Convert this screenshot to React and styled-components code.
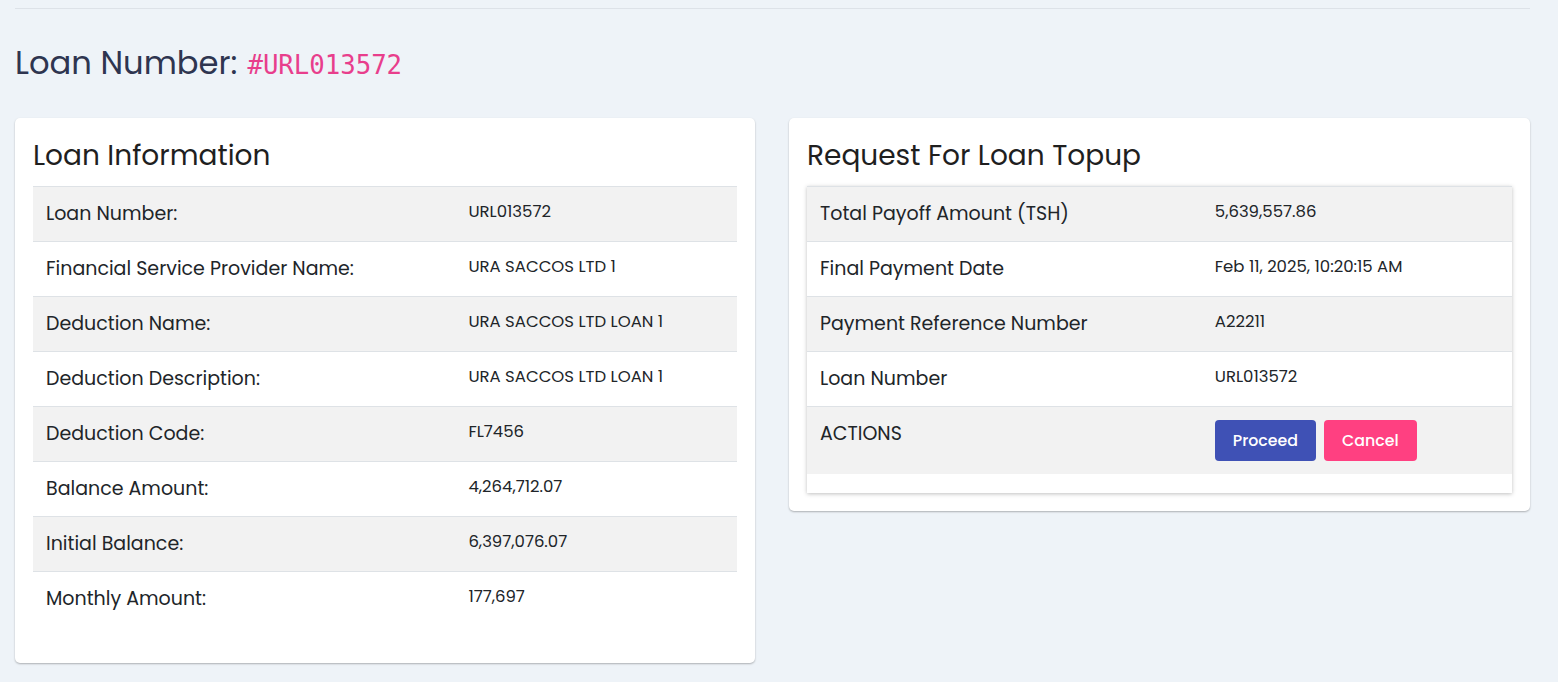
import React from "react";
import styled, { createGlobalStyle } from "styled-components";

const Global = createGlobalStyle`
  html, body { margin: 0; padding: 0; background: #eef3f8; }
  body { font-family: "Poppins", "Inter", "Noto Sans", sans-serif; color: #212529; }
  * { box-sizing: border-box; }
`;

const Page = styled.div`
  padding: 8px 28px 20px 15px;
  min-height: 682px;
`;

const Rule = styled.hr`
  margin: 0;
  border: 0;
  border-top: 1px solid #dde2e8;
`;

const PageTitle = styled.h1`
  margin: 34px 0 33px;
  font-size: 32.2px;
  font-weight: 400;
  color: #2e3550;
  line-height: 40px;
  display: flex;
  align-items: baseline;
  gap: 10px;
`;

const Code = styled.span`
  font-family: "DejaVu Sans Mono", "Liberation Mono", monospace;
  font-size: 25.7px;
  color: #e83e8c;
`;

const Grid = styled.div`
  display: grid;
  grid-template-columns: 740px 741px;
  gap: 34px;
  align-items: start;
`;

const Card = styled.section`
  background: #fff;
  border-radius: 5px;
  box-shadow: 0 1px 2px rgba(0, 0, 0, 0.28);
  padding: 18px 18px ${(p) => p.$pb || 18}px;
`;

const CardTitle = styled.h2`
  margin: 2px 0 12px;
  font-size: 28px;
  font-weight: 400;
  line-height: 36px;
  color: #1f1f1f;
`;

const TableWrap = styled.div`
  box-shadow: ${(p) => (p.$raised ? "0 1px 4px rgba(0,0,0,0.25)" : "none")};
  padding-bottom: ${(p) => (p.$raised ? 19 : 0)}px;
`;

const Table = styled.table`
  width: 100%;
  border-collapse: collapse;
`;

const Row = styled.tr`
  background: ${(p) => (p.$striped ? "#f2f2f2" : "#fff")};
  border-top: 1px solid #dee2e6;
`;

const Label = styled.td`
  width: ${(p) => p.$w};
  padding: 15px 13px;
  height: ${(p) => p.$h || 55}px;
  font-size: 19px;
  color: #212529;
  vertical-align: top;
  line-height: 24px;
`;

const Value = styled.td`
  padding: 14px 13px ${(p) => p.$pb ?? 14}px;
  font-size: 16.5px;
  color: #212529;
  vertical-align: top;
  line-height: 22px;
`;

const Buttons = styled.div`
  display: flex;
  gap: 8px;
  margin-top: -1px;
`;

const Button = styled.button`
  font-family: inherit;
  font-size: 15.8px;
  font-weight: 500;
  color: #fff;
  background: ${(p) => p.$bg};
  border: 0;
  border-radius: 4px;
  height: 41px;
  padding: 0 18px;
  cursor: pointer;
`;

const loanInfo = [
  ["Loan Number:", "URL013572"],
  ["Financial Service Provider Name:", "URA SACCOS LTD 1"],
  ["Deduction Name:", "URA SACCOS LTD LOAN 1"],
  ["Deduction Description:", "URA SACCOS LTD LOAN 1"],
  ["Deduction Code:", "FL7456"],
  ["Balance Amount:", "4,264,712.07"],
  ["Initial Balance:", "6,397,076.07"],
  ["Monthly Amount:", "177,697"],
];

const topup = [
  ["Total Payoff Amount (TSH)", "5,639,557.86"],
  ["Final Payment Date", "Feb 11, 2025, 10:20:15 AM"],
  ["Payment Reference Number", "A22211"],
  ["Loan Number", "URL013572"],
];

export default function App() {
  return (
    <>
      <Global />
      <Page>
        <Rule />
        <PageTitle>
          Loan Number: <Code>#URL013572</Code>
        </PageTitle>
        <Grid>
          <Card $pb={36}>
            <CardTitle>Loan Information</CardTitle>
            <TableWrap>
              <Table>
                <tbody>
                  {loanInfo.map(([k, v], i) => (
                    <Row key={k} $striped={i % 2 === 0}>
                      <Label $w="60%">{k}</Label>
                      <Value>{v}</Value>
                    </Row>
                  ))}
                </tbody>
              </Table>
            </TableWrap>
          </Card>
          <Card>
            <CardTitle>Request For Loan Topup</CardTitle>
            <TableWrap $raised>
              <Table>
                <tbody>
                  {topup.map(([k, v], i) => (
                    <Row key={k} $striped={i % 2 === 0}>
                      <Label $w="56%">{k}</Label>
                      <Value>{v}</Value>
                    </Row>
                  ))}
                  <Row $striped>
                    <Label $w="56%" $h={67}>ACTIONS</Label>
                    <Value $pb={11}>
                      <Buttons>
                        <Button $bg="#3f51b5">Proceed</Button>
                        <Button $bg="#ff4081">Cancel</Button>
                      </Buttons>
                    </Value>
                  </Row>
                </tbody>
              </Table>
            </TableWrap>
          </Card>
        </Grid>
      </Page>
    </>
  );
}
